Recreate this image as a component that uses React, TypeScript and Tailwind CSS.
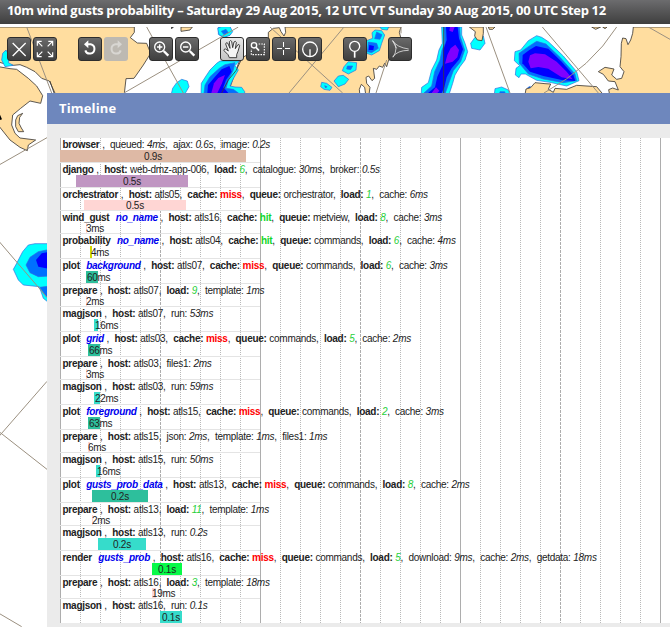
import React from "react";

type Part = { label: string; value: string; kind?: "plain" | "italic" | "hit" | "miss" | "load" };
type Row = {
  name: string;
  link?: string;
  parts: Part[];
  left: number;
  width: number;
  time: string;
  color: string;
  short?: boolean;
};

const h = (value: string): Part => ({ label: "host", value });
const t = (label: string, value: string): Part => ({ label, value, kind: "italic" });
const q = (value: string): Part => ({ label: "queue", value });
const load = (value: string): Part => ({ label: "load", value, kind: "load" });
const hit: Part = { label: "cache", value: "hit", kind: "hit" };
const miss: Part = { label: "cache", value: "miss", kind: "miss" };

const GREEN = "#2dbf9c";
const TEAL = "#36dccb";
const PINK = "#ffd6d4";

const rows: Row[] = [
  { name: "browser", parts: [t("queued", "4ms"), t("ajax", "0.6s"), t("image", "0.2s")], left: 0, width: 186, time: "0.9s", color: "#deb9a5" },
  { name: "django", parts: [h("web-dmz-app-006"), load("6"), t("catalogue", "30ms"), t("broker", "0.5s")], left: 16, width: 112, time: "0.5s", color: "#c096c2" },
  { name: "orchestrator", parts: [h("atls05"), miss, q("orchestrator"), load("1"), t("cache", "6ms")], left: 24, width: 102, time: "0.5s", color: PINK, short: true },
  { name: "wind_gust", link: "no_name", parts: [h("atls16"), hit, q("metview"), load("8"), t("cache", "3ms")], left: 26, width: 1, time: "3ms", color: PINK, short: true },
  { name: "probability", link: "no_name", parts: [h("atls04"), hit, q("commands"), load("6"), t("cache", "4ms")], left: 30, width: 2, time: "4ms", color: "#d0d800" },
  { name: "plot", link: "background", parts: [h("atls07"), miss, q("commands"), load("6"), t("cache", "3ms")], left: 26, width: 12, time: "60ms", color: GREEN },
  { name: "prepare", parts: [h("atls07"), load("9"), t("template", "1ms")], left: 26, width: 1, time: "2ms", color: PINK, short: true },
  { name: "magjson", parts: [h("atls07"), t("run", "53ms")], left: 34, width: 4, time: "16ms", color: TEAL },
  { name: "plot", link: "grid", parts: [h("atls03"), miss, q("commands"), load("5"), t("cache", "2ms")], left: 28, width: 12, time: "66ms", color: GREEN },
  { name: "prepare", parts: [h("atls03"), t("files1", "2ms")], left: 26, width: 1, time: "3ms", color: PINK, short: true },
  { name: "magjson", parts: [h("atls03"), t("run", "59ms")], left: 34, width: 6, time: "22ms", color: TEAL },
  { name: "plot", link: "foreground", parts: [h("atls15"), miss, q("commands"), load("2"), t("cache", "3ms")], left: 28, width: 12, time: "63ms", color: GREEN },
  { name: "prepare", parts: [h("atls15"), t("json", "2ms"), t("template", "1ms"), t("files1", "1ms")], left: 28, width: 2, time: "6ms", color: PINK, short: true },
  { name: "magjson", parts: [h("atls15"), t("run", "50ms")], left: 36, width: 4, time: "16ms", color: TEAL },
  { name: "plot", link: "gusts_prob_data", parts: [h("atls13"), miss, q("commands"), load("8"), t("cache", "2ms")], left: 32, width: 56, time: "0.2s", color: GREEN },
  { name: "prepare", parts: [h("atls13"), load("11"), t("template", "1ms")], left: 32, width: 1, time: "2ms", color: PINK, short: true },
  { name: "magjson", parts: [h("atls13"), t("run", "0.2s")], left: 38, width: 48, time: "0.2s", color: TEAL },
  { name: "render", link: "gusts_prob", parts: [h("atls16"), miss, q("commands"), load("5"), t("download", "9ms"), t("cache", "2ms"), t("getdata", "18ms")], left: 92, width: 30, time: "0.1s", color: "#08fa48" },
  { name: "prepare", parts: [h("atls16"), load("3"), t("template", "18ms")], left: 92, width: 4, time: "19ms", color: PINK, short: true },
  { name: "magjson", parts: [h("atls16"), t("run", "0.1s")], left: 100, width: 22, time: "0.1s", color: TEAL },
];

const valueClass = {
  plain: "",
  italic: "italic",
  hit: "font-bold text-[#12d62c]",
  miss: "font-bold text-[#ff0000]",
  load: "italic text-[#1fd03a]",
};

function TimelineRow({ row, first }: { row: Row; first: boolean }) {
  const align = row.width > 20 ? "justify-center" : row.short ? "" : "pl-px";
  return (
    <div className={`w-[200px] ${first ? "" : "border-t border-[#e4e4e4]"}`}>
      <div className="h-3 whitespace-pre pl-[2.5px] leading-[13px] [word-spacing:0.2px]">
        <b>{row.name}</b>
        {row.link && <b className="ml-px italic text-[#0000ee]">{"  "}{row.link}</b>}
        <span> ,</span>
        {row.parts.map((p, i) => {
          const strong = ["host", "queue", "load"].includes(p.label) || p.kind === "hit" || p.kind === "miss";
          return (
            <span key={i}>
              {"  "}
              <span className={strong ? "font-bold" : ""}>{p.label}:</span>{" "}
              <span className={valueClass[p.kind ?? "plain"]}>{p.value}</span>
              {i < row.parts.length - 1 ? "," : ""}
            </span>
          );
        })}
      </div>
      <div
        className={`flex whitespace-nowrap ${row.short ? "h-2.5 leading-[11px]" : "h-3 leading-[13px]"} ${align}`}
        style={{ marginLeft: row.left, width: row.width, backgroundColor: row.color }}
      >
        {row.time}
      </div>
    </div>
  );
}

function GridLines() {
  return (
    <svg className="absolute inset-0 h-full w-full" shapeRendering="crispEdges">
      {Array.from({ length: 31 }, (_, i) => (
        <line
          key={i}
          x1={i * 20 + 0.5}
          x2={i * 20 + 0.5}
          y1="0"
          y2="485"
          stroke={i % 5 === 0 ? "#adadad" : "#b9b9b9"}
          strokeDasharray={i % 10 === 0 ? undefined : i % 5 === 0 ? "3 1" : "1 1"}
        />
      ))}
    </svg>
  );
}

const C = { stroke: "#2d6be0", strokeWidth: 2 };
const cy = { fill: "#00ffff", ...C };
const bl = { fill: "#0070ff", ...C };
const db = { fill: "#0000ff" };
const vi = { fill: "#7f00ff" };
const land = { fill: "#ffdd9f", stroke: "#3d3a36", strokeWidth: 2.5 };
const grat = { fill: "none", stroke: "#9b9080", strokeWidth: 3 };

function WeatherMap() {
  return (
    <svg className="absolute inset-0 h-full w-full" viewBox="0 0 2010 1800" preserveAspectRatio="none">
      <g transform="translate(0,-81)">
        <path {...land} d="M-5 81H403V97L391 113L412 129L440 130L452 160L430 195L402 235L378 236L372 290H170L148 243L125 235L105 215L80 202L60 194L40 196L20 193L-5 186Z" />
        <path {...land} d="M-5 200L30 206L50 208L85 235L110 258L128 287L122 310L90 303L62 325L38 345L35 375L45 400L60 414L107 420L85 435L82 452L60 442L30 420L-5 376Z" />
        <path {...land} fill="none" d="M150 243L162 279" />
        <path {...land} d="M68 340L53 347L47 360L47 380L55 395L71 395L64 384L57 370L59 352Z" />
        <path {...cy} d="M8 160L18 150L30 170L25 188L40 196L15 200L5 180Z" />
        <path d="M0 344L6 358L0 360Z" />
        <path d="M513 82L522 82L514 87Z" />
        <path {...land} d="M543 81V94L570 90L577 81Z" />
        <path {...cy} d="M655 81H690V105L670 112L655 103Z" />
        <path {...cy} d="M530 248L545 238L562 243L567 260L550 290H512L518 265Z" />
        <g transform="translate(600,0)">
          <path {...land} d="M118 183L132 170L205 130V97L220 85L238 83L243 95L252 108L257 97L255 81H603L598 97L602 112L565 183L560 200L554 190L548 202L538 198L530 208L520 205L524 235L516 242L506 228L498 232L500 250L510 262L506 290H498L494 262L484 253L478 268L480 290H80Z" />
          <path {...cy} d="M53 85L65 80H90L98 95L90 106L72 112L57 104Z" />
          <path {...bl} d="M64 94L78 88L85 98L72 104Z" />
          <path {...cy} d="M118 183L105 197L115 210L108 222L98 240L90 258L105 261L125 262L134 275V290H3L4 250L18 228L30 210L50 190L60 183Z" />
          <path {...bl} d="M105 188L100 210L85 240L78 265L100 268L115 279H12L15 255L30 230L58 205L75 194Z" />
          <path {...db} d="M88 198L95 215L78 240L70 262L85 279H22L24 255L45 230L65 208Z" />
          <path {...vi} d="M75 225L66 250L52 279H34L42 250L55 234Z" />
          <path {...land} fill="none" d="M122 183L108 212L85 240L65 279" />
          <path {...cy} d="M540 81H566L562 90L545 88ZM525 90L545 92L554 105L545 130L538 152L515 165L500 160V122L518 115L516 98Z" />
          <path {...bl} d="M530 96L546 104L540 118L524 116ZM505 126L530 130L535 145L515 158L502 155Z" />
          <path {...db} d="M508 135L522 138L520 150L506 150Z" />
          <path {...cy} d="M445 185L470 188L468 210L445 222L427 212L432 200ZM415 228L430 226L446 238L435 252L415 260L402 243ZM365 247L380 250L396 262L390 271L372 268L362 260Z" />
          <path {...bl} d="M442 198L458 198L452 209L440 207ZM374 257L381 260L377 264Z" />
        </g>
        <g transform="translate(1260,0)">
          <path {...cy} d="M65 81H125V105L135 130L143 155L135 180L120 200L105 225L98 250L85 290H3L5 262L25 248L35 210L50 180L57 150L67 130Z" />
          <path {...bl} d="M72 81H119L121 110L134 150L122 185L100 212L88 245L76 279H12L35 258L44 215L60 180L66 150L74 130Z" />
          <path {...db} d="M78 81H113L117 115L129 148L118 178L95 205L80 232L73 262L65 279H24L45 262L52 230L68 195L70 150L80 120Z" />
          <path {...vi} d="M90 81H104L98 96L88 92ZM92 145L106 134L117 150L112 172L98 185L75 191L82 165ZM35 279L48 262L58 272L52 279Z" />
          <path {...land} fill="none" d="M71 81V279" />
          <path {...cy} d="M165 112L190 108L195 130L180 150L155 145L152 130Z" />
          <path {...land} d="M148 81H190V100L186 122L172 120L164 108L166 95ZM205 81H225L218 88H208ZM515 81L527 88L542 81ZM548 81L555 86L561 81Z" />
          <path {...cy} d="M350 107L365 112L385 125L430 168L470 215L477 242L440 258L390 247L350 241L316 222L303 222L297 233L286 225L288 205L299 197L283 182L285 155L302 150L325 122Z" />
          <path {...bl} d="M350 124L378 132L420 172L465 222L470 242L430 248L370 237L325 222L298 190L297 160L325 140Z" />
          <path {...db} d="M348 138L385 146L425 185L460 225L466 243L425 240L370 228L330 215L307 190L308 165L328 150Z" />
          <path {...vi} d="M345 160L375 163L410 185L440 215L458 238L425 232L385 206L355 201L332 205L325 185L330 166Z" />
          <path {...cy} d="M222 290L225 266L245 261L265 270L272 290Z" />
          <path {...bl} d="M236 290L240 275H254L260 290ZM323 263L331 259L329 266Z" />
          <path {...land} d="M314 290L318 267L332 263L345 248L375 251L392 252L385 268L400 277L405 265L440 268L470 256L530 260L555 290Z" />
          <path {...land} d="M640 81L638 100L632 120L624 134L618 116L608 114L604 130L603 170L600 200L612 215L605 235L590 238L575 225L582 207L555 202L535 215L550 223L565 243L585 245L595 270L578 264L566 269L570 290H760V81Z" />
        </g>
        <g>
          <path {...cy} d="M85 735L105 731L150 731V911L130 895L118 860L70 855L55 840L40 808L50 790L68 755Z" />
          <path {...bl} d="M150 748L115 755L90 772L78 795L90 818L115 830L150 828ZM120 862L150 858V900L134 885Z" />
          <path {...db} d="M150 755L125 760L108 780L115 800L150 807Z" />
        </g>
        <path {...grat} d="M80 81L155 279M372 279L715 81M440 81L550 279M810 81L1028 279M1032 81L867 279M1203 81V100M1160 180L1128 279M1458 81L1530 279M1627 81L1795 279M1850 81Q1775 200 1632 279M1945 81L2010 118M-3 495L141 413M-3 724L141 892M-3 1309L141 1144M-3 1295L141 1408M-3 1840L65 1880" />
      </g>
    </svg>
  );
}

function Tool({ children, state = "dark" }: { children: React.ReactNode; state?: "dark" | "active" | "off" }) {
  const look = {
    dark: "border border-[#2d2d2d] bg-linear-to-b from-[#6a6a6a] to-[#3f3f3f] text-white",
    active: "border border-[#2d2d2d] bg-linear-to-b from-[#e8e8e8] to-[#c4c4c4] text-[#333]",
    off: "bg-[#bdb9b2] text-[#d8d6d2]",
  }[state];
  return (
    <div className={`relative size-6 rounded-[3px] ${look}`}>
      <svg
        className={`absolute size-6 ${state === "off" ? "left-0 top-0" : "-left-px -top-px"}`}
        viewBox="0 0 72 72"
        fill="none"
        stroke="currentColor"
        strokeWidth="4"
      >
        {children}
      </svg>
    </div>
  );
}

function Lens({ plus }: { plus?: boolean }) {
  return (
    <>
      <circle cx="32" cy="30" r="15" />
      <path d="M24 30H40" strokeWidth="4.5" />
      {plus && <path d="M32 22V38" strokeWidth="4.5" />}
      <path d="M44 42L58 56" strokeWidth="7" />
    </>
  );
}

function Toolbar() {
  return (
    <div className="absolute left-[7px] top-2.5 flex gap-[21px]">
      <div className="flex gap-0.5">
        <Tool><path d="M17 18L56 57M56 18L17 57" /></Tool>
        <Tool>
          <path strokeWidth="3.5" d="M13 26V13H26M14 14L28 28M46 13H59V26M58 14L44 28M13 46V59H26M14 58L28 44M46 59H59V46M58 58L44 44" />
        </Tool>
      </div>
      <div className="flex gap-0.5">
        <Tool>
          <path strokeWidth="6" d="M28 22H38A14 14 0 1 1 22 40" />
          <path fill="currentColor" stroke="none" d="M18 22L31 10V34Z" />
        </Tool>
        <Tool state="off">
          <path strokeWidth="6" d="M44 22H34A14 14 0 1 0 50 40" />
          <path fill="currentColor" stroke="none" d="M54 22L41 10V34Z" />
        </Tool>
      </div>
      <div className="flex gap-0.5">
        <Tool><Lens plus /></Tool>
        <Tool><Lens /></Tool>
      </div>
      <div className="flex gap-0.5">
        <Tool state="active">
          <path
            strokeWidth="2.8"
            strokeLinejoin="round"
            fill="#f4f4f4"
            d="M28 62L24 53L12 41Q11 35 17 36L25 42L17 21Q18 15 23 18L30 34L28 14Q31 8 35 13L38 32L42 15Q46 10 49 16L46 35L53 24Q58 20 59 26L54 43L50 53V62Z"
          />
        </Tool>
        <Tool>
          <circle cx="24" cy="25" r="8" strokeWidth="4" />
          <path d="M30 31L39 41" strokeWidth="5" />
          <path strokeWidth="3.5" strokeDasharray="4.5 3.5" d="M38 21H55V53H16V36" />
        </Tool>
        <Tool><path strokeWidth="3" d="M15 34.5H30M39 34.5H54M34.5 15V30M34.5 39V54" /></Tool>
        <Tool>
          <circle cx="36" cy="37" r="22" />
          <path d="M36 37V58" />
        </Tool>
      </div>
      <Tool>
        <circle cx="35" cy="28" r="15" />
        <path d="M35 43V62" strokeWidth="5" />
      </Tool>
      <Tool>
        <path strokeWidth="2.5" stroke="#dedede" d="M14 11Q26 31 62 36M14 60Q28 40 62 40M14 11Q33 34 15 61M14 11L26 34" />
      </Tool>
    </div>
  );
}

export default function App() {
  return (
    <div className="flex h-[627px] w-[670px] flex-col overflow-hidden bg-white font-['Liberation_Sans',Arial,sans-serif]">
      <div className="flex h-6 shrink-0 items-center bg-linear-to-b from-[#6c6c6e] to-[#3f3f3f] pb-1 pl-[7px]">
        <span className="whitespace-nowrap font-['Open_Sans','Noto_Sans',sans-serif] text-[13px] font-bold leading-[20px] tracking-[-0.32px] text-white">
          10m wind gusts probability – Saturday 29 Aug 2015, 12 UTC VT Sunday 30 Aug 2015, 00 UTC Step 12
        </span>
      </div>
      <div className="relative mt-[3px] h-[600px] pl-[47px] pt-[66px]">
        <WeatherMap />
        <Toolbar />
        <div className="relative flex h-[534px] flex-col bg-[#ebebeb]">
          <div className="flex h-[31px] items-center bg-[#6e87bd] pb-0.5 pl-3">
            <span className="font-['Open_Sans','Noto_Sans',sans-serif] text-[13px] font-bold leading-[20px] tracking-[0.15px] text-white">Timeline</span>
          </div>
          <div className="relative ml-[13px] mt-3.5 h-[485px] bg-white">
            <GridLines />
            <div className="relative text-[10px] tracking-[-0.28px] text-[#222]">
              {rows.map((row, i) => (
                <TimelineRow key={i} row={row} first={i === 0} />
              ))}
            </div>
          </div>
        </div>
      </div>
    </div>
  );
}
